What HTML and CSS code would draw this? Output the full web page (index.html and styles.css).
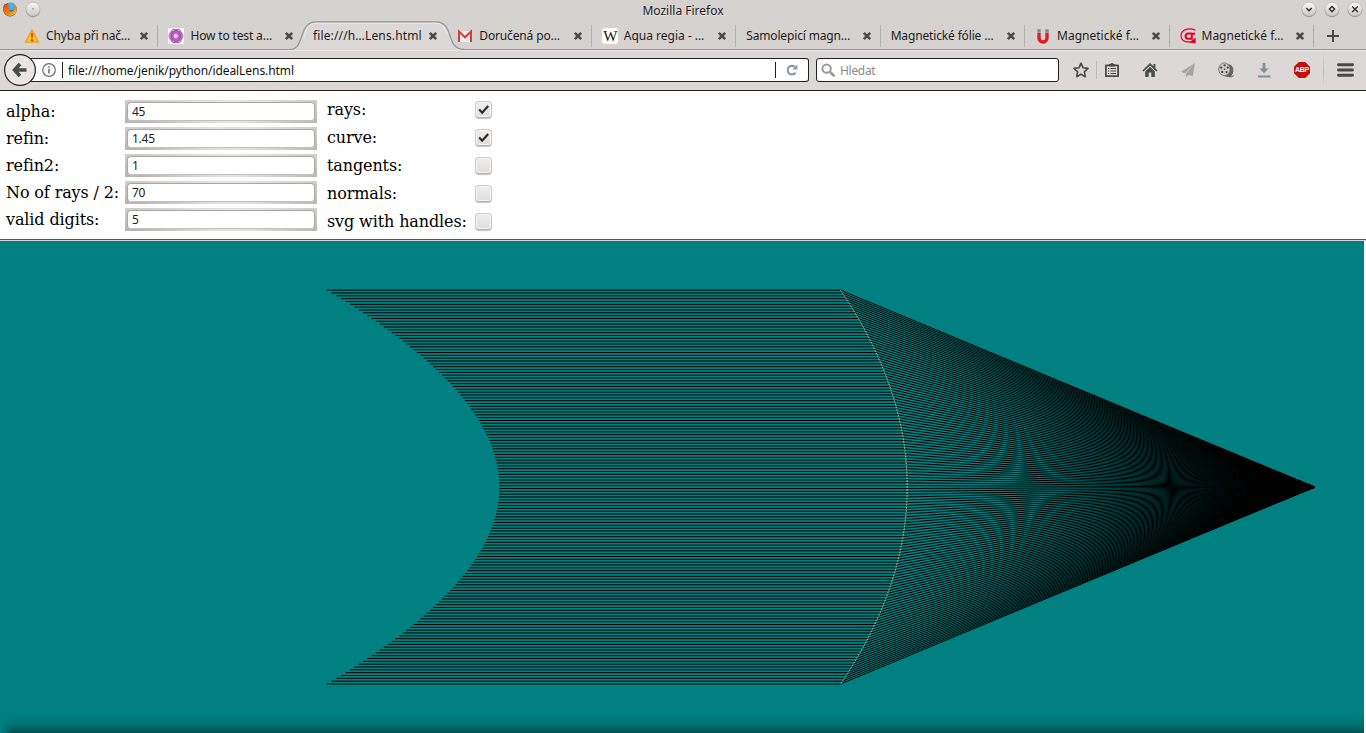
FILE: index.html
```html
<!DOCTYPE html>
<html lang="cs">
<head>
<meta charset="utf-8">
<title>Mozilla Firefox</title>
<link rel="stylesheet" href="styles.css">
</head>
<body>
<svg width="0" height="0" class="defs">
  <defs>
    <symbol id="close" viewBox="0 0 10 10"><path d="M1.8 1.8 8.2 8.2M8.2 1.8 1.8 8.2" stroke="#4a4a4a" stroke-width="2.6" fill="none"/></symbol>
    <linearGradient id="knob" x1="0" y1="0" x2="0" y2="1"><stop offset="0" stop-color="#fbfbfa"/><stop offset="1" stop-color="#c9c6c3"/></linearGradient>
    <linearGradient id="fox" x1="0" y1="0" x2="1" y2="1"><stop offset="0" stop-color="#d8400c"/><stop offset=".6" stop-color="#f08418"/><stop offset="1" stop-color="#ffd23c"/></linearGradient>
  </defs>
</svg>
<header class="titlebar">
  <div class="title-left">
    <svg width="16" height="16" viewBox="0 0 16 16"><circle cx="8" cy="8.6" r="6.8" fill="#284f8c"/><circle cx="9" cy="5.4" r="4" fill="#4faede"/><path d="M2.6 2.5 4.4 4 7 3.8 6.4 6 8.5 7 7 8.3 8 10.4Q11 11 12 8.5L12.7 4Q15.5 7 14.5 10.6A7 7 0 0 1 1.2 9.5Q.6 5.5 2.6 2.5Z" fill="url(#fox)"/></svg>
    <svg width="16" height="17" viewBox="0 0 16 17"><circle cx="8" cy="9" r="7.2" fill="#8f8b88"/><circle cx="8" cy="8.2" r="7" fill="url(#knob)" stroke="#aaa6a3" stroke-width=".5"/><circle cx="8" cy="8" r=".8" fill="#777"/></svg>
  </div>
  <div class="title-text">Mozilla Firefox</div>
  <div class="title-right">
    <svg width="16" height="17" viewBox="0 0 16 17"><circle cx="8" cy="9" r="7.2" fill="#8f8b88"/><circle cx="8" cy="8.2" r="7" fill="url(#knob)" stroke="#aaa6a3" stroke-width=".5"/><path d="M5.3 7 8 9.7 10.7 7" stroke="#2f2f2f" stroke-width="1.5" fill="none"/></svg>
    <svg width="16" height="17" viewBox="0 0 16 17"><circle cx="8" cy="9" r="7.2" fill="#8f8b88"/><circle cx="8" cy="8.2" r="7" fill="url(#knob)" stroke="#aaa6a3" stroke-width=".5"/><path d="M8 5.5 10.6 8.1 8 10.7 5.4 8.1Z" stroke="#2f2f2f" stroke-width="1.4" fill="none"/></svg>
    <svg width="16" height="17" viewBox="0 0 16 17"><circle cx="8" cy="9" r="7.2" fill="#8f8b88"/><circle cx="8" cy="8.2" r="7" fill="url(#knob)" stroke="#aaa6a3" stroke-width=".5"/><path d="M5.2 5.4 10.8 11M10.8 5.4 5.2 11" stroke="#2f2f2f" stroke-width="1.4" fill="none"/></svg>
  </div>
</header>
<nav class="tabs">
  <div class="tab">
    <svg class="fav" viewBox="0 0 16 16"><path d="M8 2 14.6 14.2H1.4Z" fill="#fdc528" stroke="#f59a12" stroke-width="1.3" stroke-linejoin="round"/><path d="M7.1 5.2h1.8l-.3 5H7.4zM7 11.2h2v1.8H7z" fill="#e02818"/></svg>
    <span class="label">Chyba při nač…</span><svg class="x"><use href="#close"/></svg>
  </div>
  <div class="tab">
    <svg class="fav" viewBox="0 0 16 16"><path d="M0 0h16v16H0z" fill="#fff"/><circle cx="8" cy="8" r="5.6" fill="#cf97d1"/><g fill="none" stroke="#a03aa4" stroke-width=".9"><ellipse cx="8" cy="8" rx="7" ry="5"/><ellipse cx="8" cy="8" rx="7" ry="4.6" transform="rotate(60 8 8)"/><ellipse cx="8" cy="8" rx="7" ry="4.6" transform="rotate(120 8 8)"/><circle cx="8" cy="8" r="3.4"/></g><circle cx="7.6" cy="8" r="1.8" fill="#ecd0ed"/></svg>
    <span class="label">How to test a…</span><svg class="x"><use href="#close"/></svg>
  </div>
  <div class="tab active">
    <svg class="shape" width="174" height="30" viewBox="0 0 174 30"><path d="M0 29.5C15 29.5 8 2 26 2H146C165 2 155 29.5 174 29.5V30H0Z" fill="#dcd8d7"/><path d="M0 29.5C15 29.5 8 2 26 2H146C165 2 155 29.5 174 29.5" fill="none" stroke="#93989b" stroke-width="1.3"/><path d="M14 17C16 9 18 3.2 26 3.2H146C152 3.2 155 8 157 14" fill="none" stroke="#efedec"/></svg>
    <span class="label wide">file:///h…Lens.html</span><svg class="x"><use href="#close"/></svg>
  </div>
  <div class="tab">
    <svg class="fav" viewBox="0 0 16 16"><path d="M1.5 3h13v11h-13z" fill="#eeecec"/><path d="M2 14V3.6L8 9.3 14 3.6V14" fill="none" stroke="#d83c30" stroke-width="2"/></svg>
    <span class="label">Doručená po…</span><svg class="x"><use href="#close"/></svg>
  </div>
  <div class="tab">
    <span class="fav wiki">W</span>
    <span class="label wide">Aqua regia - …</span><svg class="x"><use href="#close"/></svg>
  </div>
  <div class="tab"><span class="label">Samolepicí magn…</span><svg class="x"><use href="#close"/></svg></div>
  <div class="tab"><span class="label">Magnetické fólie …</span><svg class="x"><use href="#close"/></svg></div>
  <div class="tab">
    <svg class="fav" viewBox="0 0 16 16"><path d="M4 5v5a4 4 0 0 0 8 0V5" fill="none" stroke="#e01c26" stroke-width="3.4"/><path d="M2.3 1.2h3.4v3.6H2.3zM10.3 1.2h3.4v3.6h-3.4z" fill="#85898b"/></svg>
    <span class="label wide">Magnetické f…</span><svg class="x"><use href="#close"/></svg>
  </div>
  <div class="tab">
    <svg class="fav" viewBox="0 0 16 16"><path d="M15.5 2.2C8-.8 1 1.8 1 8c0 4 3.5 6.6 9.5 5.8" fill="none" stroke="#e6002a" stroke-width="1.2"/><path d="M11.5 5.6H8.2a2.6 2.6 0 0 0 0 5.2h3.6V5.8h3.4" fill="none" stroke="#e6002a" stroke-width="2"/><path d="M9 14.4 15.6 9.6v5.9z" fill="#e6002a"/></svg>
    <span class="label wide">Magnetické f…</span><svg class="x"><use href="#close"/></svg>
  </div>
  <svg class="plus" width="12" height="12" viewBox="0 0 12 12"><path d="M6 0v12M0 6h12" stroke="#4a4a4a" stroke-width="2"/></svg>
</nav>
<div class="toolbar">
  <div class="urlbar">
    <svg class="info" width="14" height="14" viewBox="0 0 14 14"><circle cx="7" cy="7" r="6.3" fill="none" stroke="#6e6e6e" stroke-width="1.2"/><path d="M7 6v4.6M7 3.2v1.6" stroke="#6e6e6e" stroke-width="1.6"/></svg>
    <i class="bar"></i><span class="url">file:///home/jenik/python/idealLens.html</span><i class="bar end"></i>
    <svg class="reload" width="12" height="12" viewBox="0 0 12 12"><path d="M9.5 8.6A4.3 4.3 0 1 1 8.8 2.9" fill="none" stroke="#8998a7" stroke-width="2.1"/><path d="M6.4 5.4H11.4V.4Z" fill="#8998a7"/></svg>
  </div>
  <svg class="back" width="34" height="34" viewBox="0 0 34 34"><circle cx="17" cy="17" r="15.4" fill="#e9e5e4" stroke="#241f20" stroke-width="1.2"/><path d="M17 11 11.6 17l5.4 6M12 17h11.5" fill="none" stroke="#4b4b4b" stroke-width="3.6"/></svg>
  <div class="search">
    <svg width="15" height="15" viewBox="0 0 15 15"><circle cx="5.6" cy="5.6" r="4.2" fill="none" stroke="#9a9a9a" stroke-width="2"/><path d="M8.8 8.8 13.6 13.2" stroke="#9a9a9a" stroke-width="2.6"/></svg>
    <span class="hint">Hledat</span>
  </div>
  <div class="icons">
    <svg viewBox="0 0 16 16"><path d="M8 1.2 10.1 5.8 15 6.4 11.4 9.8 12.3 14.7 8 12.3 3.7 14.7 4.6 9.8 1 6.4 5.9 5.8Z" fill="none" stroke="#4b4b4b" stroke-width="1.6" stroke-linejoin="round"/></svg>
    <i class="line"></i>
    <svg viewBox="0 0 16 16"><path d="M1.9 3.4h12.2v10.8H1.9z" fill="none" stroke="#4b4b4b" stroke-width="1.8" stroke-linejoin="round"/><path d="M5 4.4V2h1.5a1.6 1.6 0 0 1 3 0H11v2.4z" fill="#4b4b4b"/><path d="M4 6.5h1.3M6.5 6.5h5.6M4 9h1.3M6.5 9h5.6M4 11.5h1.3M6.5 11.5h5.6" stroke="#4b4b4b" stroke-width="1"/></svg>
    <svg viewBox="0 0 16 16"><path d="M8 1 .4 8.4l1.2 1.2L8 3.4l6.4 6.2 1.2-1.2-2.2-2.2V2h-2v2.3z" fill="#4b4b4b"/><path d="M8 4.7 3.2 9.4V15h3.5v-4.4h2.6V15h3.5V9.4z" fill="#4b4b4b"/></svg>
    <svg viewBox="0 0 16 16"><path d="M15 1 1 9.8l4 1.4zM15 1 6 11.6v4l2.4-2.9 4.3 1.7z" fill="#a6a4a3"/></svg>
    <svg viewBox="0 0 16 16"><ellipse cx="9.8" cy="8.5" rx="5.6" ry="6.6" fill="#666"/><ellipse cx="6.4" cy="7.3" rx="5.7" ry="6.4" fill="#c9c9c9" stroke="#686868" stroke-width=".8"/><g fill="#444"><circle cx="6.6" cy="3.3" r="1.1"/><circle cx="3.2" cy="5.6" r="1.1"/><circle cx="9.8" cy="5.6" r="1.1"/><circle cx="4.2" cy="9.9" r="1.1"/><circle cx="8.6" cy="10.1" r="1.1"/><circle cx="6.5" cy="7.2" r=".7"/></g><path d="M11 14.7q3 .6 4.5-1" stroke="#555" fill="none"/></svg>
    <svg viewBox="0 0 16 16"><path d="M6.6 1h2.8v5.5h3.2L8 11.3 3.4 6.5h3.2zM2 13.4h12.4v2H2z" fill="#839195"/></svg>
    <span class="abp">ABP</span>
    <i class="line tall"></i>
    <svg class="menu" viewBox="0 0 16 16"><path d="M1.4 2.5h13.2M1.4 7.5h13.2M1.4 12.5h13.2" stroke="#4a4a4a" stroke-width="2.8" stroke-linecap="round"/></svg>
  </div>
</div>
<main class="page">
  <form class="form">
    <div class="fields">
      <label>alpha:</label><span class="box"><input value="45"></span>
      <label>refin:</label><span class="box"><input value="1.45"></span>
      <label>refin2:</label><span class="box"><input value="1"></span>
      <label>No of rays / 2:</label><span class="box"><input value="70"></span>
      <label>valid digits:</label><span class="box"><input value="5"></span>
    </div>
    <div class="checks">
      <label>rays:</label><span class="check"><svg viewBox="0 0 16 16"><path d="M3.4 8 6.6 11.4 13 4.2" fill="none" stroke="#292929" stroke-width="2.3"/></svg></span>
      <label>curve:</label><span class="check"><svg viewBox="0 0 16 16"><path d="M3.4 8 6.6 11.4 13 4.2" fill="none" stroke="#292929" stroke-width="2.3"/></svg></span>
      <label>tangents:</label><span class="check"></span>
      <label>normals:</label><span class="check"></span>
      <label>svg with handles:</label><span class="check"></span>
    </div>
  </form>
  <div class="canvas">
    <svg id="lens" width="1364" height="492" viewBox="0 241 1364 492"></svg>
    <div class="shade"></div>
  </div>
</main>
<script src="lens.js"></script>
</body>
</html>
```
FILE: styles.css
```css
* { box-sizing: border-box; }
body { margin: 0; width: 1366px; height: 733px; overflow: hidden; background: #fff; font: 12px "Noto Sans", "Open Sans", sans-serif; color: #1f1c1b; display: flex; flex-direction: column; }
.defs { position: absolute; }
.titlebar { height: 20px; background: #d6d2cf; display: grid; grid-template-columns: 100px 1fr 100px; flex: none; }
.title-left { display: flex; gap: 7px; padding: 1px 0 0 2px; }
.title-text { text-align: center; line-height: 21px; font-size: 12px; letter-spacing: 0; text-shadow: 0 1px #e8e6e4; }
.title-right { display: flex; gap: 7px; justify-content: flex-end; padding: 1px 3px 0 0; }
.tabs { height: 30px; background: #d6d2cf; padding-left: 14px; display: flex; flex: none; border-bottom: 1px solid #95989a; }
.tab { position: relative; width: 144.45px; flex: none; height: 29px; padding: 2px 9px 0 10px; display: flex; align-items: center; }
.tab::after { content: ""; position: absolute; right: 0; top: 5px; width: 1px; height: 22px; background: #b1adaa; }
.tab:nth-child(2)::after, .active::after { display: none; }
.fav { width: 16px; height: 16px; margin-right: 6px; flex: none; }
.label { flex: 1; white-space: nowrap; overflow: hidden; letter-spacing: -.15px; line-height: 20px; position: relative; }
.label.wide { letter-spacing: 0; }
.active .label { letter-spacing: .15px; }
.x { width: 10px; height: 10px; flex: none; position: relative; }
.shape { position: absolute; left: -13px; top: 0; }
.wiki { background: #fff; border-radius: 3px; font: 15px/16px "Liberation Serif", serif; text-align: center; letter-spacing: -1px; color: #111; }
.plus { margin: 10px 0 0 13px; }
.toolbar { height: 41px; background: #dcd8d7; border-top: 1px solid #e9e7e6; border-bottom: 1px solid #241f20; display: flex; padding-left: 30px; flex: none; position: relative; }
.urlbar { margin-top: 7px; width: 779px; height: 24px; background: #fff; border: 1px solid #241f20; border-left: 0; border-radius: 0 3px 3px 0; display: flex; align-items: center; }
.back { position: absolute; left: 3px; top: 2px; }
.info { margin-left: 12px; }
.bar { width: 1px; height: 16px; background: #241f20; margin: 0 5px 0 6px; }
.bar.end { margin: 0 10px 0 auto; }
.url { letter-spacing: -.07px; color: #111; }
.reload { margin-right: 10px; }
.search { margin: 7px 0 0 7px; width: 243px; height: 24px; background: #fff; border: 1px solid #241f20; border-radius: 3px; display: flex; align-items: center; padding-left: 4px; gap: 4px; }
.hint { color: #8c8c8c; letter-spacing: -.3px; }
.icons { display: flex; align-items: center; margin: 0 0 0 14px; height: 38px; }
.icons svg, .abp { width: 16px; height: 16px; flex: none; margin-right: 22px; }
.icons svg:first-child { margin-right: 7px; }
.line { width: 1px; height: 18px; background: #bcb8b7; margin-right: 7px; }
.abp { background: #c70d0a; clip-path: polygon(30% 0, 70% 0, 100% 30%, 100% 70%, 70% 100%, 30% 100%, 0 70%, 0 30%); font: bold 7px/16px "Liberation Sans", sans-serif; color: #fff; text-align: center; letter-spacing: -.2px; }
.line.tall { height: 36px; background: linear-gradient(#dcd8d7, #bcb8b7, #dcd8d7); margin: 0 13px 0 -9px; }
.icons .menu { margin: 0; width: 17px; height: 17px; }
.page { flex: 1; display: flex; flex-direction: column; }
.form { height: 150px; padding: 7px 0 0 6px; display: flex; gap: 10px; border-bottom: 1px solid #d5d5d5; box-shadow: inset 0 -1px #555; font: 16px "DejaVu Serif", serif; letter-spacing: -.12px; color: #000; }
.fields { display: grid; grid-template-columns: 119px 192px; grid-auto-rows: 27px; align-items: center; align-content: start; }
.fields label { white-space: nowrap; }
.box { width: 192px; height: 23px; padding: 2px; display: flex; background: radial-gradient(ellipse 90px 40px at 55% 60%, #efeded, transparent), linear-gradient(#d2cecc, #bab4b1); }
.box input { width: 188px; height: 19px; margin: 0; padding: 0 4px 1px; font: 12px "Noto Sans", sans-serif; color: #1f1c1b; letter-spacing: -.25px; border: 1px solid #aaa7a5; border-bottom-color: #c4c0be; border-radius: 4px; background: #fff; outline: 0; }
.checks { display: grid; grid-template-columns: 148px 18px; grid-auto-rows: 28px; align-items: center; align-content: start; margin-top: -3px; }
.check { width: 17px; height: 17px; border-radius: 4px; margin-top: 1px; background: linear-gradient(#efeeed, #dfdddb); border: 1px solid #cdcac8; border-bottom-color: #b3b0ae; box-shadow: 0 1px 1px #c4c4c4, inset 0 0 0 1px #f7f6f6; }
.check svg { width: 15px; height: 15px; display: block; }
.canvas { position: relative; width: 1364px; height: 492px; background: #008080; }
.canvas svg { display: block; }
.shade { position: absolute; left: 0; right: 0; bottom: 0; height: 19px; background: linear-gradient(transparent, rgba(0,0,0,.1) 50%, rgba(0,0,0,.36)); -webkit-mask: linear-gradient(90deg, transparent, #000 12px); mask: linear-gradient(90deg, transparent, #000 12px); }
.rays { stroke: #000; stroke-width: 1; fill: none; }
.curve { stroke: #e3b383; stroke-width: .9; stroke-dasharray: 1.9 1.1; fill: none; }
```
FILE: lens.js
```js
// Parallel rays meet the lens surface and converge on the focus.
const focus = { x: 1315, y: 487.08 };
const vertex = 907.2, bend = 582, half = 196.92, count = 140;
let rays = "", curve = "";
for (let i = 0; i < count; i++) {
  const dy = -half + i * 2 * half / (count - 1);
  const x = vertex - dy * dy / bend;
  const y = focus.y + dy;
  const r = Math.hypot(focus.x - x, dy);
  rays += `<path d="M${x - r} ${y}L${x} ${y}L${focus.x} ${focus.y}"/>`;
  curve += (i ? "L" : "M") + x + " " + y;
}
document.getElementById("lens").innerHTML =
  `<g class="rays">${rays}</g><path class="curve" d="${curve}"/>`;
```
